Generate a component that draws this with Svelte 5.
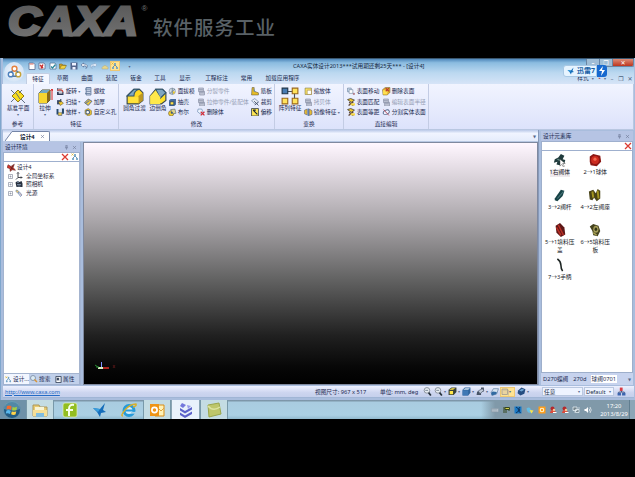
<script>
  // Icon bodies, all drawn on a 16 x 16 grid
  const icons = {
    page: '<path d="M2 2h9l3 3v10H2z" fill="#fff" stroke="#53658c" stroke-width="1.5"/><path d="M3 4h8" stroke="#e07060" stroke-width="2"/>',
    pageRed: '<path d="M2 2h10l2 3v9H2z" fill="#fff" stroke="#53658c" stroke-width="1.5"/><path d="M4 6l6 6M10 5l-4 8" stroke="#c83030" stroke-width="3"/>',
    pageBlue: '<path d="M2 2h10l2 3v9H2z" fill="#fff" stroke="#4d7095" stroke-width="1.5"/><path d="M4 9l3 3 6-7" fill="none" stroke="#28879c" stroke-width="2.5"/>',
    folder: '<path d="M1 13V4h5l2 2h5v3" fill="#d0a020" stroke="#6f5d1b"/><path d="M1 14l4-7h10l-4 7z" fill="#f0d040" stroke="#6f622a"/>',
    save: '<path d="M1 1h14v14H1z" fill="#53658c"/><path d="M4 2h8v5H4zM5 10h6v5H5z" fill="#eef2ff"/>',
    undo: '<path d="M7 2L2 6l5 4V8c5-1 7 1 5 5 5-5 2-9-5-9z" fill="#fff" stroke="#49618c" stroke-width="1.3"/>',
    redo: '<path d="M9 2l5 4-5 4V8C4 7 2 9 4 13-1 8 2 4 9 4z" fill="#eef6ff" stroke="#8ca7c8" stroke-width="1.3"/>',
    dome: '<path d="M2 11q6-8 12 0v3H2z" fill="#e7d68b" stroke="#aca77c"/>',
    tree: '<path d="M8 2v4M8 6L4 10M8 6l4 4M4 10v4M12 10v4" stroke="#4582ad" stroke-width="1.6"/><circle cx="8" cy="4" r="2" fill="#72a4c5"/><circle cx="4" cy="12" r="2" fill="#72a4c5"/><circle cx="12" cy="12" r="2" fill="#72a4c5"/><path d="M1 1l4 4M5 1L1 5" stroke="#e4b427" stroke-width="1.5"/>',
    plane: '<path d="M8 2l6 6-6 6-6-6z" fill="#f8dc20" stroke="#8f791c"/><path d="M1 2l4 4M11 11l4 4M12 2L9 5M5 10l-4 4M6 5l4 6" stroke="#526378" stroke-width=".9"/>',
    extrude: '<path d="M2 5l3-3h8v10l-3 3H2z" fill="#e5b52b" stroke="#51502e"/><path d="M2 5h8v10H2z" fill="#f8d530"/><path d="M2 5l3-3h8l-3 3z" fill="#77a8c1"/><path d="M10 5l3-3v10l-3 3z" fill="#8a6a1b"/><path d="M15 12V1m-1.500 2L15 1l1 2" stroke="#d92925" fill="none"/>',
    round: '<path d="M1 8l6-6h5l3 3v7l-4 3H1z" fill="#ffd821" stroke="#37474d"/><path d="M1 8l6-6h5q-5 1-5 6z" fill="#7fa6c0" stroke="#31546c"/><path d="M11 8l4-3v7l-4 3z" fill="#bc9724"/><path d="M2 9h9v5H2z" fill="#ffe23c"/>',
    chamfer: '<path d="M1 8l5-6h6l3 3v7l-4 3H1z" fill="#ffe026" stroke="#37474d"/><path d="M6 2h6l3 3-5 5z" fill="#7fa6c0" stroke="#31546c"/><path d="M1 8l5-5 4 6v6H1z" fill="#ffe84c"/>',
    turn: '<path d="M2 2h10v5H2z" fill="#56617c"/><path d="M2 9h12v6H2z" fill="#263350"/><path d="M4 4h9M5 11h7" stroke="#fff" stroke-width="2"/><path d="M2 6q11-3 11 4" fill="none" stroke="#d64030" stroke-width="2"/>',
    sweep: '<path d="M2 4h6v8H2z" fill="#384968"/><path d="M5 8l4-3 5 5-6 4z" fill="#f3cc2d" stroke="#554c32"/><path d="M9 2v6" stroke="#27394e" stroke-width="2"/>',
    loft: '<path d="M1 2h4v10H1zM11 1h4v10h-4z" fill="#27496f"/><path d="M4 8h7v6H4z" fill="#e5c447" stroke="#344562"/><path d="M5 2h6v6H5z" fill="#dbe4f5"/>',
    thread: '<path d="M4 1h9v14H4z" fill="#dfe7f8" stroke="#526b91" stroke-width="1.5"/><path d="M2 4h10M4 8h9M2 12h10" stroke="#5e7696" stroke-width="1.7"/>',
    thick: '<path d="M1 9l7-7 7 4-7 8z" fill="#ebc83e" stroke="#44588a" stroke-width="1.5"/><path d="M3 10l7-5" stroke="#5e79a4" stroke-width="2"/>',
    hole: '<path d="M2 4l6-3 6 4v7l-6 3-6-4z" fill="#edc431" stroke="#796c32"/><circle cx="7" cy="8" r="3.5" fill="#fff" stroke="#486180" stroke-width="2"/>',
    draft: '<circle cx="8" cy="8" r="6" fill="#d5dce5" stroke="#6b7f91"/><path d="M8 2v12M8 8l5-4M8 8l-5 5" stroke="#637887" stroke-width="1.5"/><path d="M9 8l5 1-4 5z" fill="#e9c628"/>',
    shell: '<path d="M2 4l3-2h10v10l-3 3H2z" fill="#456b9d"/><path d="M4 7h7v6H4z" fill="#ffe047" stroke="#223e67" stroke-width="1.5"/>',
    bool: '<circle cx="6" cy="10" r="5" fill="#f4cf30" stroke="#594b2c"/><path d="M5 3l8-1 2 8-6 1z" fill="#ddd38e" stroke="#3f546e"/><circle cx="7" cy="9" r="2" fill="#38587e"/>',
    gray: '<path d="M3 2h9v7H3zM5 8h9v7H5z" fill="#cdd1df" stroke="#8d94aa" stroke-width="1.5"/><path d="M3 5h8M6 11h7" stroke="#8d94aa" stroke-width="1.5"/>',
    del: '<path d="M2 2h7l2 5-5 4-5-4z" fill="#ecf4ff" stroke="#4d729c"/><path d="M7 7l7 7M14 7l-7 7" stroke="#d02c38" stroke-width="2.3"/>',
    rib: '<path d="M2 1h4v7l8 3v4H1z" fill="#e7bc27" stroke="#5b5339"/><path d="M5 8V2l4 8" fill="#668bb0"/>',
    trim: '<path d="M1 5l6-4 7 6-6 5z" fill="#e5eaf3" stroke="#4e678e"/><path d="M6 6l8 8M14 8l-7 5" stroke="#46536c" stroke-width="1.7"/>',
    offset: '<path d="M1 1h13v14H1z" fill="#ffe653" stroke="#333e47" stroke-width="1.5"/><path d="M4 4h5M4 4l8 8" stroke="#172532" stroke-width="2.2"/>',
    array: '<path d="M4 4h8v8" stroke="#47515a" fill="none"/><path d="M1 1h5v5H1z" fill="#477bb2" stroke="#21364b"/><path d="M10 1h5v5h-5zM1 10h5v5H1zM10 10h5v5h-5z" fill="#ffe35c" stroke="#9b681d"/>',
    scale: '<path d="M2 2h12v12H2z" fill="#f9e16a" stroke="#726b35"/><path d="M6 6h8v8H6z" fill="#fff" stroke="#9a7a24"/>',
    mirror: '<path d="M1 4l5-2v11l-5-2zM10 2l5 3v7l-5 2z" fill="#e8bd34" stroke="#52516b"/><path d="M8 1v14" stroke="#3967a2" stroke-width="2"/>',
    move: '<path d="M1 2h7v7H1z" fill="#cadbed" stroke="#58718e"/><path d="M4 5h7v7H4z" fill="#fff" stroke="#58718e"/><path d="M11 13h4M13 11v4" stroke="#9d5965" stroke-width="1.5"/>',
    match: '<path d="M1 3l6-2 7 3-6 4z" fill="#f2cb30" stroke="#443e35" stroke-width="1.5"/><path d="M4 8l8 6M12 7l-9 7" stroke="#5c4334" stroke-width="2.5"/><path d="M7 10h8v4H7z" fill="#f7d844"/>',
    delFace: '<path d="M1 5l5-4h9v9l-5 5H2z" fill="#e4b02f" stroke="#71602e"/><path d="M2 6h8v8H2z" fill="#ffe050"/><path d="M7 2l6 6M13 2L7 8" stroke="#b83a2d" stroke-width="2"/>',
    split: '<ellipse cx="8" cy="8" rx="6" ry="4" transform="rotate(-25 8 8)" fill="#eef2ff" stroke="#53678a" stroke-width="1.7"/><path d="M3 3l10 11" stroke="#b84855" stroke-width="1.7"/>',
    x: '<path d="M2 2l12 12M14 2L2 14" stroke="#db3b32" stroke-width="2.5"/>',
    cross: '<path d="M3 3l10 10M13 3L3 13" stroke="#727c98" stroke-width="2"/>',
    pin: '<path d="M5 2h6M6 2v7M10 2v7M3 9h10M8 9v6" stroke="#626e8c" stroke-width="1.7"/>',
    doc: '<path d="M2 3l5 3 6-4-2 6 4 5-6-1-3 3-1-5-5-2z" fill="#d53529" stroke="#642a2a"/><path d="M5 6l6 5M11 4l-5 9" stroke="#5a2422" stroke-width="1.5"/>',
    axis: '<path d="M6 1v10h8M6 11l-4 4M4 3l2-2 2 2M12 9l2 2-2 2" fill="none" stroke="#30343b" stroke-width="1.8"/>',
    camera: '<path d="M1 5l4-3 4 2 4-2 2 5v7H3z" fill="#29313f"/><circle cx="6" cy="4" r="2" fill="#76869b"/><path d="M4 9h8M5 12h6" stroke="#71839a" stroke-width="2"/>',
    light: '<path d="M2 2l4 1 2 3-3 2-3-3z" fill="#e9c77b" stroke="#55769b"/><path d="M6 8l3-2 5 6-3 3z" fill="#cfe2f3" stroke="#3c5c98"/><path d="M9 8l4 5" stroke="#d77e6b"/>',
    zoom: '<circle cx="7" cy="6" r="5" fill="#e8eef3" stroke="#8a929d" stroke-width="1.7"/><path d="M10 10l4 5" stroke="#25303b" stroke-width="3"/><path d="M4 6h5" stroke="#72808f" stroke-width="1.5"/>',
    cubeY: '<path d="M1 5l5-4h9v8l-5 5H1z" fill="#39423b"/><path d="M2 5l5-3h6l-4 3zM3 7h6v6H3z" fill="#ffe549"/>',
    cubeB: '<path d="M1 5l4-4h10v9l-4 5H1z" fill="#31659d"/><path d="M1 6h10v9H1z" fill="#3f78b5"/><path d="M2 5l4-3h8l-3 3z" fill="#d4e5f2"/>',
    cubeW: '<path d="M2 10l4-7h9l-3 9-8 3z" fill="#d8e4f0" stroke="#42688f"/><path d="M2 10l3-2 7 1-1 4-8 2z" fill="#326aa2"/>',
    view: '<path d="M2 8h7v6H1zM9 1h5v7H9z" fill="#485467"/><path d="M4 7l7-4 3 3-7 6z" fill="#c1cad9" stroke="#364156"/>',
    sphere: '<path d="M2 6l6-5 7 3-2 8-7 3-5-4z" fill="#244c80"/><path d="M4 6l5-3 4 2-5 3z" fill="#6fa4d2"/>',
    wire: '<path d="M2 2h11v11H2z" fill="#ead4a0" stroke="#9b9792" stroke-width="1.5"/><path d="M4 4h11v11" fill="none" stroke="#aaa497"/>',
    org: '<path d="M8 5v4M3 12V9h10v3" fill="none" stroke="#374974" stroke-width="1.5"/><path d="M5 1h5v6H5z" fill="#d83c45"/><path d="M1 10h6v5H1zM9 10h6v5H9z" fill="#3c65af"/>',
    prop: '<path d="M2 1h12v14H2z" fill="#fff" stroke="#36435a" stroke-width="2"/><path d="M4 4h5v6H4z" fill="#38465e"/><path d="M11 4v8" stroke="#8390a8"/>',
    find: '<circle cx="6" cy="6" r="5" fill="#dcebf4" stroke="#718499" stroke-width="1.5"/><path d="M9 9l5 5" stroke="#d99336" stroke-width="3"/>',
    kb: '<path d="M1 5h14v7H1z" fill="#b4c0ca" stroke="#8596a5"/><path d="M3 7h10M3 10h10" stroke="#74899a" stroke-dasharray="1 1"/>',
    plug: '<path d="M2 2v12M4 3h9v4H4zM6 7v7M12 7v3" fill="#d2ce4b" stroke="#34461f" stroke-width="2"/>',
    blue: '<path d="M1 1h14v14H1z" fill="#1a7ac6"/><path d="M4 2l8 6-8 6M12 2L8 8l5 6" stroke="#0b3562" fill="none" stroke-width="2"/>',
    cloud: '<path d="M1 5q6-5 9 2l4 3-3 4q-8 0-9-5z" fill="#63bde4"/><path d="M7 8l8 1-4 6z" fill="#ffe348"/>',
    orange: '<path d="M1 1h14v14H1z" fill="#ff9d18"/><circle cx="8" cy="8" r="3.5" fill="none" stroke="#fff4cb" stroke-width="2.3"/>',
    qq: '<circle cx="7" cy="5" r="4" fill="#b42a2d"/><path d="M2 14q1-7 6-6 5 0 6 6z" fill="#d94b3d"/><circle cx="10" cy="8" r="2.5" fill="#f8c590"/><path d="M8 13h7" stroke="#fff" stroke-width="2"/>',
    net: '<path d="M2 2h8v7H2zM7 7h7v6H7z" fill="#75858c" stroke="#eef8fc" stroke-width="1.4"/><path d="M4 12h3M14 2v5" stroke="#fff"/>',
    sound: '<path d="M1 6h3l4-4v12l-4-4H1z" fill="#fff"/><path d="M10 5q3 3 0 6M12 2q5 6 0 12" stroke="#fff" fill="none" stroke-width="1.3"/>',
    explorer: '<path d="M1 3h6l1 2h7v9H1z" fill="#e8cb71" stroke="#ac975b"/><path d="M3 5h9v6H3z" fill="#f9f5d5"/><path d="M1 8h14v6H1z" fill="#f5df95"/><path d="M4 11h8v4H4z" fill="#80bddf"/>',
    green: '<rect x="1" y="1" width="14" height="14" rx="2" fill="#92be21" stroke="#e4f0c0" stroke-width=".7"/><path d="M12 3q-5-1-5 4v7M4 8h7" fill="none" stroke="#f7ffe5" stroke-width="2"/>',
    bird: '<path d="M1 6l7 1 5-6-2 7 3 2-5 1-1 4-3-5z" fill="#146dba"/><path d="M1 6l7 1-2 3z" fill="#38a0df"/>',
    ie: '<circle cx="8" cy="8.500" r="5" fill="#d8edf8" stroke="#269bda" stroke-width="3"/><path d="M4 8.500h9" stroke="#269bda" stroke-width="2"/><path d="M10 10.800h5" stroke="#abd0e3" stroke-width="1.800"/><path d="M2 14Q-1 14 4 8t11-6q1 2-3 3" fill="none" stroke="#d8af28" stroke-width="1.3"/>',
    outlook: '<path d="M6 3h9v11H6z" fill="#fff2b6" stroke="#d98d15"/><path d="M1 2h9v12H1z" fill="#ef9515"/><circle cx="5.500" cy="8" r="2.6" fill="none" stroke="#fff" stroke-width="1.7"/><path d="M10 7l2 2 3-3" fill="none" stroke="#e0a43b"/>',
    layers: '<path d="M2 6l5 3 7-4v2.500l-7 4-5-3zM2 10.500l5 3 7-4v2.500l-7 4-5-3z" fill="#5c62ca"/><path d="M4 1l4 2-3 3-3-2z" fill="#7478dc"/><path d="M9 3l4 1-3 3z" fill="#9699e9"/>',
    note: '<path d="M2 3l11-2 2 11-12 3z" fill="#bdc66a" stroke="#9aa74c"/><path d="M2 4q5 6 12 1" fill="none" stroke="#dce3a0" stroke-width="1.500"/>',
    app: '<g stroke="#e5813d" stroke-width="1.5" fill="#fff"><circle cx="8" cy="4" r="2.6"/><circle cx="4" cy="10" r="2.6" stroke="#4d81bd"/><circle cx="12" cy="10" r="2.6" stroke="#c7a337"/></g><path d="M6 6l-2 2M10 6l2 2M6 12h4" stroke="#577ba4" stroke-width="1.5"/>',
    body: '<path d="M2 7l4-2 3-4 4 2-2 4 3 1-1 4-3-1-2 3-4-1 1-3-4 1z" fill="#203b3c"/><path d="M5 7l4 2" stroke="#668b86" stroke-width="1.5"/><path d="M8 7v8l2-2 2 3 1-1-2-3h3z" fill="#fff" stroke="#333" stroke-width=".5"/>',
    ball: '<path d="M2 4l4-3 8 2 1 7-5 5-7-1-1-4z" fill="#8c1713"/><circle cx="8" cy="8" r="4.500" fill="#cc2a1e"/><circle cx="8" cy="7" r="1.8" fill="#f26a50"/>',
    rod: '<path d="M2 12l7-10 4 1-2 6-6 6-3-1z" fill="#174346"/><path d="M5 12l7-8" stroke="#49777b" stroke-width="1.3"/>',
    seat: '<path d="M1 4l5-2 3 4 2-5 3 2v9l-4 3-3-4-2 3-3-1z" fill="#494317"/><path d="M5 4l1 7M11 3l1 9" stroke="#a4951f" stroke-width="2.2"/>',
    gland: '<path d="M3 3l5-3 5 5 1 8-5 3-5-5z" fill="#5d1716"/><path d="M6 2l6 12M4 5l5 9" stroke="#b82e25" stroke-width="1.8"/>',
    plate: '<path d="M2 4l4-3 6 2 2 6-3 6-5-1-1-5z" fill="#45431f"/><ellipse cx="9" cy="7" rx="3" ry="4" fill="#a49c58"/><ellipse cx="9" cy="7" rx="1.5" ry="2" fill="#343719"/><path d="M6 11l4 3" stroke="#aba353" stroke-width="1.5"/>',
    handle: '<path d="M5 1q4 3 4 7 0 4 2 7" fill="none" stroke="#1d2523" stroke-width="1.8"/>'
  };

  const tabs = [['特征', 24], ['草图', 25], ['曲面', 24], ['装配', 25], ['钣金', 24], ['工具', 24], ['显示', 26], ['工程标注', 37], ['常用', 23], ['加载应用程序', 49]];

  // big: [icon, label, width, size, arrow]; cols: { w, items: [icon, label, disabled, arrow] }
  const groups = [
    { name: '参考', w: 32, lead: 1, big: [['plane', '基准平面', 30, 16, true]], cols: [] },
    { name: '特征', w: 85, lead: 0, big: [['extrude', '拉伸', 22, 16, true]], cols: [
      { w: 28, items: [['turn', '旋转', 0, 1], ['sweep', '扫描', 0, 1], ['loft', '放样', 0, 1]] },
      { w: 34, items: [['thread', '螺纹'], ['thick', '加厚'], ['hole', '自定义孔']] } ] },
    { name: '修改', w: 156, lead: 2, big: [['round', '圆角过渡', 27, 18], ['chamfer', '边倒角', 20, 18]], cols: [
      { w: 29, items: [['draft', '面拔模'], ['shell', '抽壳'], ['bool', '布尔']] },
      { w: 54, items: [['gray', '分裂零件', 1], ['gray', '拉伸零件/装配体', 1], ['del', '删除体']] },
      { w: 23, items: [['rib', '筋板'], ['trim', '裁剪'], ['offset', '偏移']] } ] },
    { name: '变换', w: 69, lead: 1, big: [['array', '阵列特征', 28, 18]], cols: [
      { w: 39, items: [['scale', '缩放体'], ['gray', '拷贝体', 1], ['mirror', '镜像特征', 0, 1]] } ] },
    { name: '直接编辑', w: 85, lead: 3, big: [], cols: [
      { w: 35, items: [['move', '表面移动'], ['match', '表面匹配'], ['match', '表面等距']] },
      { w: 46, items: [['delFace', '删除表面'], ['gray', '编辑表面半径', 1], ['split', '分割实体表面']] } ] }
  ];

  const parts = [['body', '1右阀体'], ['ball', '2→1球体'], ['rod', '3→2阀杆'], ['seat', '4→2左阀座'], ['gland', '5→1填料压盖'], ['plate', '6→5填料压板'], ['handle', '7→3手柄']];
</script>

{#snippet icon(name, size = 8)}
  <svg class="icon" width={size} height={size} viewBox="0 0 16 16">{@html icons[name]}</svg>
{/snippet}

<div class="screen">
  <header class="banner">
    <svg width="290" height="58">
      <defs><linearGradient id="metal" x1="0" y1="0" x2="0" y2="1"><stop offset="0" stop-color="#565656" /><stop offset="1" stop-color="#747474" /></linearGradient></defs>
      <text class="brand" x="8" y="35" textLength="130" lengthAdjust="spacingAndGlyphs">CAXA</text>
      <text class="reg" x="141.500" y="10.500">®</text>
      <text class="slogan" x="153" y="34.500" textLength="122">软件服务工业</text>
    </svg>
  </header>

  <div class="window">
    <div class="top">
      <div class="orb">{@render icon('app', 15)}</div>
      <div class="title">
        <div class="quick">
          {#each ['page', 'pageRed', 'pageBlue', 'folder', 'save', 'undo', 'redo', 'dome'] as q}{@render icon(q, 8)}{/each}
          <span class="hot">{@render icon('tree', 8)}</span><b class="arrow">▾</b>
        </div>
        <span class="caption">CAXA实体设计2013***试用期还剩25天*** - [设计4]</span>
        <div class="controls"><i>–</i><i>❐</i><i class="close">✕</i></div>
      </div>
      <nav>
        {#each tabs as [t, w], i}<span class:active={i === 0} style="width:{w}px">{t}</span>{/each}
        <div class="style"><span>样式</span><b class="arrow">▾</b><em>◔</em><b class="arrow">▾</b><i>–</i><i>❐</i><i>✕</i></div>
      </nav>
      <div class="xunlei"><span class="pill">{@render icon('bird', 8)}迅雷7</span><span class="bolt"><svg width="8" height="10" viewBox="0 0 8 10"><path d="M5 0L1 5h3L3 10l4-6H4z" fill="#fff" /></svg></span></div>
    </div>

    <div class="ribbon">
      {#each groups as g}
        <section style="width:{g.w}px">
          <div class="tools" style="padding-left:{g.lead}px">
            {#each g.big as [ic, label, w, size, arrow]}
              <div class="big" style="width:{w}px"><div class="bigicon">{@render icon(ic, size)}</div><span>{label}</span>{#if arrow}<b class="arrow">▾</b>{/if}</div>
            {/each}
            {#each g.cols as c}
              <div class="col" style="width:{c.w}px">
                {#each c.items as [ic, label, off, arrow]}
                  <div class="tool" class:off>{@render icon(ic, 8.5)}<span>{label}</span>{#if arrow}<b class="arrow">▾</b>{/if}</div>
                {/each}
              </div>
            {/each}
          </div>
          <div class="name">{g.name}</div>
        </section>
      {/each}
    </div>

    <div class="work">
      <div class="mainarea">
        <div class="doctabs">
          <svg width="8" height="10"><path d="M0 10L7 .5h1V10z" fill="#fff" /><path d="M0 10L7 .5h1" fill="none" stroke="#7585a7" /></svg>
          <div class="doctab">设计4 {@render icon('cross', 5)}</div><b class="arrow">▼</b>
        </div>
        <div class="split">
          <aside class="left">
            <div class="head"><span>设计环境</span>{@render icon('pin', 5)}{@render icon('cross', 5)}</div>
            <div class="search">{@render icon('x', 8)}{@render icon('tree', 8)}</div>
            <div class="tree">
              <div class="root">{@render icon('doc', 9)}设计4</div>
              {#each [['axis', '全局坐标系'], ['camera', '照相机'], ['light', '光源']] as [ic, t]}
                <div class="leaf"><svg width="6" height="8"><path d="M.5 2.5h4v4h-4zM1.5 4.5h2M2.5 3.5v2" fill="none" stroke="#8a91a2" stroke-width=".7" /></svg>{@render icon(ic, 8)}<span>{t}</span></div>
              {/each}
            </div>
            <div class="ptabs"><span class="on">{@render icon('tree', 7)}设计...</span><span>{@render icon('find', 8)}搜索</span><span>{@render icon('prop', 7)}属性</span></div>
          </aside>
          <main>
            <svg width="45" height="24"><path d="M17.500 17.500V12" stroke="#7f91ff" /><path d="M14 18h5" stroke="#d8f0c4" stroke-width="2" /><path d="M19 18h6" stroke="#e22c24" stroke-width="1.5" /><path d="M11 15l3 2M12 17h3" stroke="#268e33" /><path d="M29 15l2 3M31 15l-2 3" stroke="#651a1a" stroke-width=".7" /></svg>
          </main>
        </div>
      </div>
      <aside class="right">
        <div class="head"><span>设计元素库</span>{@render icon('pin', 5)}{@render icon('cross', 5)}</div>
        <div class="search">{@render icon('x', 8)}</div>
        <div class="parts">
          {#each parts as [ic, t], i}<div class="part">{@render icon(ic, 14)}<span class:picked={i === 0}>{t}</span></div>{/each}
        </div>
        <div class="libtabs"><span>D270蝶阀</span><span>270d</span><span class="on">球阀0701</span><b class="arrow">▼</b></div>
      </aside>
    </div>

    <footer>
      <a href="http://www.caxa.com">http://www.caxa.com</a>
      <span class="dim">视图尺寸: 967 x 517</span><span class="unit">单位: mm, deg</span>
      <div class="views">
        {@render icon('zoom', 9)}{@render icon('zoom', 9)}<b class="arrow">▾</b>
        {@render icon('cubeY', 9)}<b class="arrow">▾</b>
        {@render icon('cubeB', 9)}<b class="arrow">▾</b>
        {@render icon('view', 9)}<b class="arrow">▾</b>
        {@render icon('cubeW', 9)}
        <span class="hot wide">{@render icon('wire', 8)}<b class="arrow">▾</b></span>
        {@render icon('sphere', 9)}<b class="arrow">▾</b>
      </div>
      <div class="select any">任意<b class="arrow">▾</b></div><div class="select def">Default<b class="arrow">▾</b></div>
      {@render icon('org', 9)}
    </footer>
  </div>

  <div class="taskbar">
    <div class="start"><svg width="18" height="18" viewBox="0 0 18 18"><circle cx="9" cy="9" r="8.500" fill="#235b83" stroke="#6793ac" /><path d="M1 8a8 8 0 0 1 16 0q-8 3-16 0z" fill="#71a6bd" opacity=".6" /><path d="M4 5q3-1 4.500.5L8 9q-2-1.500-4.500-.5z" fill="#f26a2e" /><path d="M9.500 6q2 1 4.500-.3L13.500 9q-2 1-4.500.2z" fill="#a4ce43" /><path d="M3.500 9.500q2-1 4.300.4L7 13q-2-1.400-4.300-.4z" fill="#58b8ed" /><path d="M8.800 10.300q2 1 4.500 0l-.8 3.200q-2 1-4.400-.2z" fill="#ffd44b" /></svg></div>
    {#each [['explorer', 28, 1], ['green', 31], ['bird', 29], ['ie', 29], ['outlook', 28, 1], ['layers', 29, 2], ['note', 28, 1]] as [ic, w, on]}
      <div class="task" class:open={on === 1} class:front={on === 2} style="width:{w}px">{@render icon(ic, 16)}</div>
    {/each}
    <div class="tray">{#each ['kb', 'plug', 'blue', 'cloud', 'orange', 'qq', 'qq', 'net', 'sound'] as t}{@render icon(t, 8)}{/each}</div>
    <div class="clock"><span>17:20</span><span>2013/8/29</span></div>
    <div class="peek"></div>
  </div>
</div>

<style>
  :global(body) { background: #000; }
  .screen { width: 635px; height: 477px; overflow: hidden; background: #000; color: #1b2a50; font: 5.7px/8px "Noto Sans", "Noto Sans CJK SC", sans-serif; white-space: nowrap; }
  .screen * { box-sizing: border-box; }
  .icon { display: block; flex: none; }
  .arrow { font: 4px/5px "DejaVu Sans", sans-serif; color: #58698c; }
  i, em { font-style: normal; }
  .banner { height: 58px; }
  .banner svg { display: block; overflow: visible; }
  .brand { font: italic bold 40px/1 "Liberation Sans", sans-serif; fill: url(#metal); stroke: url(#metal); stroke-width: 2.800; }
  .reg { font: 8px "Liberation Sans", sans-serif; fill: #777; }
  .slogan { font: 500 19.500px "Noto Sans CJK SC", sans-serif; fill: #596166; }

  .window { height: 342px; padding: 0 1px 0 2px; display: flex; flex-direction: column; background: #a9bddd; border-left: 1px solid #7fa6cd; }
  .top { position: relative; height: 26px; flex: none; background: linear-gradient(#4f87ba 0, #8bbce0 15%, #bbd8f0 55%, #d6e4f7); border-top: 1px solid #39566f; }
  .orb { position: absolute; left: 1px; top: 3px; width: 20px; height: 20px; display: grid; place-items: center; border-radius: 50%; background: radial-gradient(#f4f8fe, #d6e5f6 65%, #bdd5ee); }
  .title { height: 14px; display: flex; align-items: center; }
  .quick { display: flex; align-items: center; gap: 2.400px; padding-left: 25px; width: 290px; }
  .hot { background: #ffe392; border: 1px solid #ecc774; display: flex; align-items: center; }
  .quick .hot { margin-left: -1px; }
  .quick .arrow { margin-left: 6px; }
  .caption { width: 134px; font-size: 5.650px; color: #162842; }
  .controls { margin-left: auto; align-self: flex-start; display: flex; height: 8px; border: 1px solid #6c86a3; border-top: 0; border-radius: 0 0 2px 2px; overflow: hidden; }
  .controls i { width: 13px; text-align: center; font: bold 6px/7px "DejaVu Sans", sans-serif; color: #fff; background: #9fbdd6; border-right: 1px solid #6785a4; }
  .controls .close { width: 20px; background: linear-gradient(#dc8d79, #bd351e); border: 0; }
  nav { height: 11px; display: flex; padding-left: 23px; line-height: 11px; }
  nav > span { text-align: center; }
  nav .active { background: #f4f7ff; border: 1px solid #c2cee3; border-bottom: 0; border-radius: 2px 2px 0 0; line-height: 10px; }
  .style { margin-left: auto; padding-right: 1px; display: flex; align-items: center; gap: 3px; }
  .style em { color: #b05262; font-size: 7px; }
  .style i { font: 6px/8px "DejaVu Sans", sans-serif; color: #4d6381; width: 6px; text-align: center; }
  .xunlei { position: absolute; left: 560px; top: 6px; height: 12px; display: flex; }
  .pill { width: 34px; display: flex; align-items: center; gap: 2px; padding-left: 3px; background: #e6f4ff; border: 1px solid #a8c8e4; border-radius: 3px 0 0 3px; color: #1761a5; font-size: 7px; font-weight: bold; }
  .bolt { width: 10px; display: grid; place-items: center; background: #1769cf; border-radius: 0 3px 3px 0; }

  .ribbon { height: 46px; flex: none; margin-left: -1px; display: flex; background: linear-gradient(#f1f4ff, #e3e8fc 70%, #dce2fb); border: 1px solid #b9c7e1; border-width: 0 1px 1px 0; }
  section { flex: none; border-right: 1px solid #c3cce4; }
  .tools { height: 34px; display: flex; }
  .big { display: flex; flex-direction: column; align-items: center; line-height: 8px; flex: none; }
  .bigicon { height: 20px; display: flex; align-items: center; padding-top: 3px; }
  .big > span { margin-top: -.5px; }
  .col { padding-top: 2.200px; flex: none; }
  .tool { height: 10.400px; display: flex; align-items: center; gap: 1.200px; }
  .off { color: #969eb5; }
  .name { text-align: center; height: 11px; line-height: 12px; }

  .work { height: 255px; flex: none; display: flex; }
  .mainarea { width: 535px; display: flex; flex-direction: column; }
  .doctabs { height: 12px; padding: 1px 0 0 2px; display: flex; align-items: flex-end; background: linear-gradient(#bac9e8, #f0f4ff 30%, #e5ecfb); border-bottom: 1px solid #b8c8e3; }
  .doctab { width: 37px; height: 10px; padding-left: 7px; display: flex; align-items: center; gap: 5px; background: #fff; border: 1px solid #7585a7; border-width: 1px 1px 0 0; border-radius: 0 2px 0 0; color: #111a34; font-weight: bold; }
  .doctabs > .arrow { margin: 0 2px 2px auto; }
  .split { flex: 1; display: flex; min-height: 0; }
  .left { width: 78px; margin-right: 2px; display: flex; flex-direction: column; background: #b9c9e5; border-right: 1px solid #a4b5d3; }
  .head { height: 10px; flex: none; padding: 0 3px 0 2px; display: flex; align-items: center; gap: 3px; background: #b6c4e4; }
  .head span { flex: 1; }
  .search { height: 10px; flex: none; display: flex; align-items: center; justify-content: flex-end; gap: 2px; background: #fff; border: 1px solid #9fb0ce; }
  .tree { flex: 1; background: #fff; border: 1px solid #a4b4cf; border-top: 0; padding: 1px 0 0 3px; color: #1e273d; }
  .root, .leaf { height: 8.500px; display: flex; align-items: center; gap: 1px; }
  .leaf { padding-left: 1px; }
  .leaf span { margin-left: 2px; }
  .ptabs { height: 11px; display: flex; background: #c1d0ea; border: 1px solid #a1b2d0; border-top: 0; }
  .ptabs span { width: 26px; display: flex; align-items: center; gap: 1px; padding-left: 1px; }
  .ptabs .on { background: #f2f6ff; }
  main { flex: 1; background: linear-gradient(#fff7ff, #e8e0e8 9%, #aaa6aa 32%, #646464 56%, #202020 80%, #070707 93%, #000); border: 1px solid #7f899f; display: flex; align-items: flex-end; padding: 0 0 10px; }

  .right { width: 95px; padding-left: 2px; border-left: 1px solid #8799b9; display: flex; flex-direction: column; }
  .right .head { margin-top: 1px; }
  .parts { flex: 1; background: #fff; border: 1px solid #9eafcb; border-top: 0; display: grid; grid-template-columns: 35.500px 35.500px; grid-template-rows: 35px 35px 35px 30px; padding-top: 2px; color: #171c29; }
  .part { display: flex; flex-direction: column; align-items: center; line-height: 7.800px; text-align: center; white-space: normal; }
  .part span { margin-top: 2px; max-width: 31px; }
  .picked { background: #eee9ed; }
  .libtabs { height: 12px; display: flex; align-items: center; background: #c7d3ee; padding-left: 2px; gap: 5px; }
  .libtabs .on { background: #fff; margin-left: -1px; padding: 0 1px; }
  .libtabs .arrow { margin: 0 2px 0 auto; }

  footer { height: 12px; flex: none; margin-top: 1px; display: flex; align-items: center; background: linear-gradient(#eef1ff, #cdd5ef 60%, #c5d0ec); border-bottom: 1px solid #a0b5d5; padding-left: 2px; }
  a { color: #246bc5; width: 310px; font-size: 5.600px; letter-spacing: -.05px; }
  .dim { width: 65px; }
  .unit { width: 43px; }
  .views { display: flex; align-items: center; gap: 1.500px; width: 119px; }
  .wide { width: 15px; height: 10px; }
  .select { height: 9px; background: #eef3ff; border: 1px solid #bac8e0; display: flex; align-items: center; justify-content: space-between; padding: 0 2px 0 1px; color: #202c48; }
  .any { width: 41px; margin-right: 1px; }
  .def { width: 30px; margin-right: 3px; }

  .taskbar { height: 19px; display: flex; background: linear-gradient(#72899b, #a9cce0 13%, #abd0e3 80%, #91b9cd); }
  .start { width: 26px; padding-right: 2px; display: grid; place-items: center; background: #6e91a8; }
  .task { display: grid; place-items: center; }
  .open { background: #c4dce3; border: 1px solid #7899a9; border-width: 0 1px; }
  .front { background: #e9f2fb; border: 1px solid #8ba5b4; border-width: 0 1px; }
  .tray { margin-left: auto; display: flex; align-items: center; gap: 3.600px; background: linear-gradient(90deg, #8eadbf00, #8099a9 12%); padding: 0 7px 0 10px; }
  .clock { width: 30px; display: flex; flex-direction: column; align-items: center; justify-content: center; color: #fff; background: #8099a9; line-height: 8px; font-size: 5.800px; }
  .peek { width: 6px; background: #8ca6b7; border-left: 1px solid #607e90; }
</style>
